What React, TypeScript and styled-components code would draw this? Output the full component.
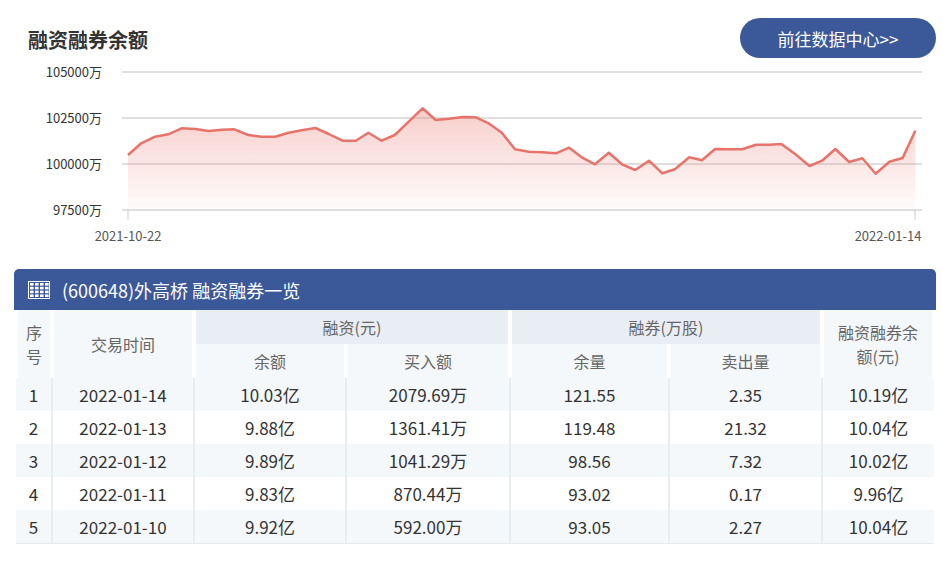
import React from "react";
import styled, { createGlobalStyle } from "styled-components";

const Global = createGlobalStyle`
  body { margin: 0; background: #fff; font-family: "Noto Sans CJK SC", "Noto Sans", sans-serif; }
`;

const Page = styled.div`
  width: 943px;
  padding: 18px 7px 0 14px;
  box-sizing: border-box;
`;

const TitleRow = styled.div`
  display: flex;
  justify-content: space-between;
  align-items: center;
  padding-left: 14px;
  height: 42px;
`;

const Title = styled.h2`
  margin: 0;
  font-size: 20px;
  font-weight: 700;
  color: #333;
`;

const LinkButton = styled.a`
  background: #3b5998;
  color: #fff;
  font-size: 17px;
  border-radius: 20px;
  width: 196px;
  height: 40px;
  display: flex;
  align-items: center;
  justify-content: center;
  text-decoration: none;
  margin-top: -2px;
`;

const ChartBox = styled.div`
  height: 205px;
`;

const raw: [number, number][] = [
  [213,465],[235,430],[258,410],[280,403],[302,385],[325,387],[347,393],[370,389],[390,388],[413,405],
  [435,410],[458,410],[480,398],[502,391],[525,384],[547,402],[570,422],[592,422],[613,398],[635,422],
  [657,405],[680,365],[703,325],[725,360],[747,356],[770,351],[792,352],[813,370],[835,398],[857,448],
  [880,455],[902,457],[925,460],[947,443],[968,472],[990,493],[1013,458],[1035,493],[1057,510],[1080,482],
  [1102,520],[1123,508],[1147,472],[1168,481],[1190,447],[1213,448],[1235,448],[1258,434],[1280,434],[1300,432],
  [1323,462],[1347,498],[1368,482],[1390,447],[1413,486],[1435,475],[1457,521],[1480,485],[1502,474],[1523,392],
];
const pts = raw.map(([x, y]) => [x / 1.664 - 14, y / 3 - 60] as [number, number]);

function Chart() {
  const line = pts.map(([x, y], i) => `${i ? "L" : "M"}${x.toFixed(1)},${y.toFixed(1)}`).join(" ");
  const area = `${line} L${pts[pts.length - 1][0].toFixed(1)},150 L${pts[0][0].toFixed(1)},150 Z`;
  const grid = [12, 58, 104, 150];
  const labels = ["105000万", "102500万", "100000万", "97500万"];
  return (
    <svg width="922" height="205" style={{ display: "block" }}>
      <defs>
        <linearGradient id="g" x1="0" y1="0" x2="0" y2="1">
          <stop offset="0" stopColor="#e8736a" stopOpacity="0.35" />
          <stop offset="1" stopColor="#e8736a" stopOpacity="0.02" />
        </linearGradient>
      </defs>
      {grid.map((y, i) => (
        <g key={y}>
          <line x1="108" x2="908" y1={y} y2={y} stroke="#d4d4d4" strokeWidth="1.5" />
          <text x="88" y={y + 5} textAnchor="end" fontSize="13" fill="#333" fontFamily="Noto Sans CJK SC, sans-serif">{labels[i]}</text>
        </g>
      ))}
      <path d={area} fill="url(#g)" />
      <path d={line} fill="none" stroke="#e8736a" strokeWidth="2.5" strokeLinejoin="round" />
      <line x1="114" x2="114" y1="150" y2="160" stroke="#ccc" />
      <line x1="901" x2="901" y1="150" y2="160" stroke="#ccc" />
      <text x="114" y="181" textAnchor="middle" fontSize="13" fill="#555" fontFamily="Noto Sans CJK SC, sans-serif">2021-10-22</text>
      <text x="874" y="181" textAnchor="middle" fontSize="13" fill="#555" fontFamily="Noto Sans CJK SC, sans-serif">2022-01-14</text>
    </svg>
  );
}

const Panel = styled.div`
  margin-top: 4px;
  width: 922px;
`;

const PanelHead = styled.div`
  background: #3b5998;
  color: #fff;
  height: 41px;
  border-radius: 5px 5px 0 0;
  display: flex;
  align-items: center;
  gap: 12px;
  padding-left: 14px;
  font-size: 18px;
`;

const Table = styled.table`
  width: 100%;
  border-collapse: collapse;
  font-size: 17px;
  color: #333;
  text-align: center;
  border-bottom: 1px solid #e6ebf0;
`;

const Th = styled.th<{ $group?: boolean }>`
  font-weight: 400;
  font-size: 16px;
  color: #666;
  background: ${(p) => (p.$group ? "#e9eef4" : "#f5f8fa")};
  border: 2px solid #fff;
  border-width: 0 4px;
  height: 34px;
  padding: 0;
`;

const Tr = styled.tr<{ $odd: boolean }>`
  background: ${(p) => (p.$odd ? "#f5f8fa" : "#fff")};
  height: 33px;
`;

const Td = styled.td`
  border-left: 2px solid #e8edf2;
  padding: 0;
  &:first-child { border-left: none; }
`;

const rows = [
  ["1", "2022-01-14", "10.03亿", "2079.69万", "121.55", "2.35", "10.19亿"],
  ["2", "2022-01-13", "9.88亿", "1361.41万", "119.48", "21.32", "10.04亿"],
  ["3", "2022-01-12", "9.89亿", "1041.29万", "98.56", "7.32", "10.02亿"],
  ["4", "2022-01-11", "9.83亿", "870.44万", "93.02", "0.17", "9.96亿"],
  ["5", "2022-01-10", "9.92亿", "592.00万", "93.05", "2.27", "10.04亿"],
];

export default function App() {
  return (
    <Page>
      <Global />
      <TitleRow>
        <Title>融资融券余额</Title>
        <LinkButton href="#">前往数据中心&gt;&gt;</LinkButton>
      </TitleRow>
      <ChartBox>
        <Chart />
      </ChartBox>
      <Panel>
        <PanelHead>
          <svg width="22" height="18" viewBox="0 0 22 18">
            <rect x="0.5" y="0.5" width="21" height="17" fill="none" stroke="#fff" />
            {[0, 1, 2, 3].map((r) =>
              [0, 1, 2, 3].map((c) => (
                <rect key={`${r}${c}`} x={2 + c * 5} y={2 + r * 3.8} width="3.6" height="2.6" fill="#fff" />
              ))
            )}
          </svg>
          (600648)外高桥 融资融券一览
        </PanelHead>
        <Table>
          <colgroup>
            <col style={{ width: 36 }} />
            <col style={{ width: 142 }} />
            <col style={{ width: 152 }} />
            <col style={{ width: 164 }} />
            <col style={{ width: 159 }} />
            <col style={{ width: 153 }} />
            <col />
          </colgroup>
          <thead>
            <tr>
              <Th rowSpan={2}>序<br />号</Th>
              <Th rowSpan={2}>交易时间</Th>
              <Th colSpan={2} $group>融资(元)</Th>
              <Th colSpan={2} $group>融券(万股)</Th>
              <Th rowSpan={2}>融资融券余<br />额(元)</Th>
            </tr>
            <tr>
              <Th>余额</Th>
              <Th>买入额</Th>
              <Th>余量</Th>
              <Th>卖出量</Th>
            </tr>
          </thead>
          <tbody>
            {rows.map((r, i) => (
              <Tr key={r[0]} $odd={i % 2 === 0}>
                {r.map((c, j) => (
                  <Td key={j}>{c}</Td>
                ))}
              </Tr>
            ))}
          </tbody>
        </Table>
      </Panel>
    </Page>
  );
}
